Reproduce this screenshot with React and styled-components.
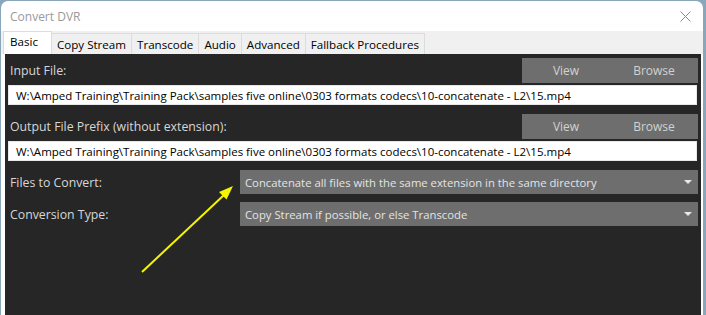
import React from "react";
import styled, { createGlobalStyle } from "styled-components";

const GlobalStyle = createGlobalStyle`
  html, body {
    margin: 0;
    padding: 0;
    background: #8aa6bb;
    font-family: "Open Sans", "Noto Sans", sans-serif;
  }
`;

const PATH =
  "W:\\Amped Training\\Training Pack\\samples five online\\0303 formats codecs\\10-concatenate - L2\\15.mp4";

const TABS = ["Basic", "Copy Stream", "Transcode", "Audio", "Advanced", "Fallback Procedures"];

const App = () => {
  return (
    <>
      <GlobalStyle />
      <Window>
        <TitleBar>
          <Title>Convert DVR</Title>
          <Close>
            <svg width="11" height="11" viewBox="0 0 11 11">
              <path d="M0.5 0.5 L10.5 10.5 M10.5 0.5 L0.5 10.5" stroke="#8a8a8a" strokeWidth="1" />
            </svg>
          </Close>
        </TitleBar>
        <TabStrip>
          {TABS.map((t, i) => (
            <Tab key={t} active={i === 0}>
              {t}
            </Tab>
          ))}
        </TabStrip>
        <Content>
          <LabelRow>
            <Label>Input File:</Label>
            <ButtonGroup>
              <GroupButton>View</GroupButton>
              <GroupButton>Browse</GroupButton>
            </ButtonGroup>
          </LabelRow>
          <Field>{PATH}</Field>
          <LabelRow>
            <Label>Output File Prefix (without extension):</Label>
            <ButtonGroup>
              <GroupButton>View</GroupButton>
              <GroupButton>Browse</GroupButton>
            </ButtonGroup>
          </LabelRow>
          <Field>{PATH}</Field>
          <OptionRow>
            <Label>Files to Convert:</Label>
            <Dropdown>
              <span>Concatenate all files with the same extension in the same directory</span>
              <Caret />
            </Dropdown>
          </OptionRow>
          <OptionRow>
            <Label>Conversion Type:</Label>
            <Dropdown>
              <span>Copy Stream if possible, or else Transcode</span>
              <Caret />
            </Dropdown>
          </OptionRow>
          <Arrow width="100%" height="100%">
            <line x1="137" y1="218" x2="219" y2="141" stroke="#f5f500" strokeWidth="2" />
            <polygon points="228,132 221.5,145.5 214,138" fill="#f5f500" />
          </Arrow>
        </Content>
      </Window>
    </>
  );
};

const Window = styled.div`
  margin: 1px 3px 0 1px;
  height: 314px;
  background: #ffffff;
  border-radius: 7px 7px 0 0;
  display: flex;
  flex-direction: column;
  overflow: hidden;
`;

const TitleBar = styled.div`
  height: 30px;
  display: flex;
  align-items: center;
  justify-content: space-between;
  padding: 0 8px 0 9px;
`;

const Title = styled.div`
  font-size: 12px;
  color: #9a9a9a;
`;

const Close = styled.div`
  display: flex;
  align-items: center;
  padding-right: 4px;
`;

const TabStrip = styled.div`
  height: 23px;
  background: #f0f0f0;
  display: flex;
  align-items: flex-end;
  padding-left: 3px;
`;

const Tab = styled.div`
  height: ${(p) => (p.active ? "23px" : "21px")};
  box-sizing: border-box;
  padding: ${(p) => (p.active ? "2px 13px 0 6px" : "1px 5px 0 5px")};
  background: ${(p) => (p.active ? "#ffffff" : "#f0f0f0")};
  border: 1px solid #dcdcdc;
  border-bottom: none;
  margin-left: -1px;
  font-size: 11.6px;
  color: #000;
  display: flex;
  align-items: ${(p) => (p.active ? "flex-start" : "center")};
`;

const Content = styled.div`
  position: relative;
  flex: 1;
  margin: 0 2px 0 4px;
  background: #262626;
  padding: 4px 3px 0 3px;
  display: flex;
  flex-direction: column;
`;

const LabelRow = styled.div`
  height: 25px;
  display: flex;
  align-items: center;
  justify-content: space-between;
  margin-top: 9px;
  &:first-child {
    margin-top: 0;
  }
`;

const Label = styled.div`
  font-size: 12.3px;
  color: #d6d6d6;
  padding-left: 2px;
`;

const ButtonGroup = styled.div`
  width: 176px;
  height: 25px;
  background: #6e6e6e;
  display: flex;
`;

const GroupButton = styled.div`
  flex: 1;
  display: flex;
  align-items: center;
  justify-content: center;
  font-size: 12px;
  color: #d2d2d2;
`;

const Field = styled.div`
  margin-top: 2px;
  height: 20px;
  box-sizing: border-box;
  background: #ffffff;
  border: 1px solid #e8e8e8;
  margin-right: 1px;
  padding-left: 7px;
  display: flex;
  align-items: center;
  font-size: 11.5px;
  color: #000;
  white-space: nowrap;
`;

const OptionRow = styled.div`
  margin-top: 9px;
  height: 24px;
  display: flex;
  align-items: center;
  justify-content: space-between;
  & + & {
    margin-top: 8px;
  }
`;

const Dropdown = styled.div`
  width: 458px;
  height: 24px;
  box-sizing: border-box;
  background: #6e6e6e;
  display: flex;
  align-items: center;
  justify-content: space-between;
  padding: 0 6px 0 5px;
  font-size: 11.3px;
  color: #e4e4e4;
`;

const Caret = styled.div`
  width: 0;
  height: 0;
  border-left: 4px solid transparent;
  border-right: 4px solid transparent;
  border-top: 4px solid #e8e8e8;
`;

const Arrow = styled.svg`
  position: absolute;
  left: 0;
  top: 0;
  pointer-events: none;
`;

export default App;
